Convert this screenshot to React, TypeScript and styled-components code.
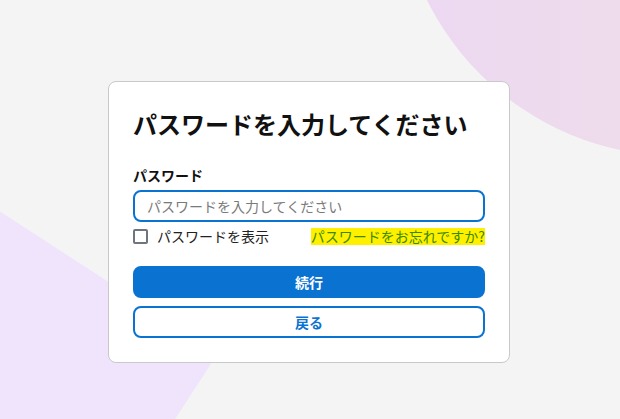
import React from "react";
import styled, { createGlobalStyle } from "styled-components";

const GlobalStyle = createGlobalStyle`
  html, body {
    margin: 0;
    padding: 0;
    background: #f4f4f4;
    font-family: "Noto Sans CJK JP", "Noto Sans", sans-serif;
  }
`;

const Page = styled.div`
  position: relative;
  width: 620px;
  height: 419px;
  overflow: hidden;
  background: #f4f4f4;
  display: flex;
  justify-content: center;
  align-items: flex-start;
  padding: 81px 2px 0 0;
  box-sizing: border-box;
`;

const Backdrop = styled.svg`
  position: absolute;
  inset: 0;
  width: 620px;
  height: 419px;
`;

const Card = styled.form`
  position: relative;
  width: 402px;
  box-sizing: border-box;
  background: #fff;
  border: 1px solid #c9c9c9;
  border-radius: 8px;
  padding: 24px 24px 24px;
  display: flex;
  flex-direction: column;
`;

const Title = styled.h1`
  margin: 0 0 23px;
  font-size: 24px;
  line-height: 36px;
  font-weight: 700;
  color: #111;
`;

const Label = styled.label`
  font-size: 14px;
  line-height: 20px;
  font-weight: 700;
  color: #111;
  margin-bottom: 5px;
`;

const Input = styled.input`
  height: 32px;
  box-sizing: border-box;
  border: 2px solid #0a72d1;
  border-radius: 8px;
  padding: 0 12px;
  font-family: inherit;
  font-size: 14px;
  color: #222;
  outline: none;
  &::placeholder {
    color: #7a7a7a;
  }
`;

const OptionRow = styled.div`
  display: flex;
  align-items: center;
  justify-content: space-between;
  margin-top: 5px;
  height: 18px;
`;

const ShowToggle = styled.label`
  display: flex;
  align-items: center;
  gap: 9px;
  font-size: 14px;
  color: #222;
`;

const Box = styled.span`
  width: 11px;
  height: 11px;
  border: 2px solid #6f7580;
  border-radius: 2px;
  background: #fff;
`;

const ForgotLink = styled.a`
  font-size: 14px;
  line-height: 17px;
  color: #3b8a00;
  background: #fff000;
  text-decoration: none;
`;

const Button = styled.button<{ $primary?: boolean }>`
  height: 32px;
  box-sizing: border-box;
  border-radius: 8px;
  border: 2px solid #0a72d1;
  background: ${(p) => (p.$primary ? "#0a72d1" : "#fff")};
  color: ${(p) => (p.$primary ? "#fff" : "#0a72d1")};
  font-family: inherit;
  font-size: 14px;
  font-weight: 700;
  margin-top: ${(p) => (p.$primary ? "21px" : "8px")};
  cursor: pointer;
`;

export default function App() {
  return (
    <Page>
      <GlobalStyle />
      <Backdrop viewBox="0 0 620 419">
        <defs>
          <linearGradient id="blob" x1="0" y1="0" x2="1" y2="0">
            <stop offset="0" stopColor="#ecd8f2" />
            <stop offset="1" stopColor="#f1e1e1" />
          </linearGradient>
        </defs>
        <circle cx="678" cy="-124" r="280" fill="url(#blob)" />
        <g transform="translate(218,353) rotate(33)">
          <rect x="-700" y="0" width="700" height="400" rx="16" fill="#f0e4fc" />
        </g>
      </Backdrop>
      <Card onSubmit={(e) => e.preventDefault()}>
        <Title>パスワードを入力してください</Title>
        <Label>パスワード</Label>
        <Input type="password" placeholder="パスワードを入力してください" />
        <OptionRow>
          <ShowToggle>
            <Box />
            パスワードを表示
          </ShowToggle>
          <ForgotLink href="#">パスワードをお忘れですか?</ForgotLink>
        </OptionRow>
        <Button $primary type="submit">続行</Button>
        <Button type="button">戻る</Button>
      </Card>
    </Page>
  );
}
